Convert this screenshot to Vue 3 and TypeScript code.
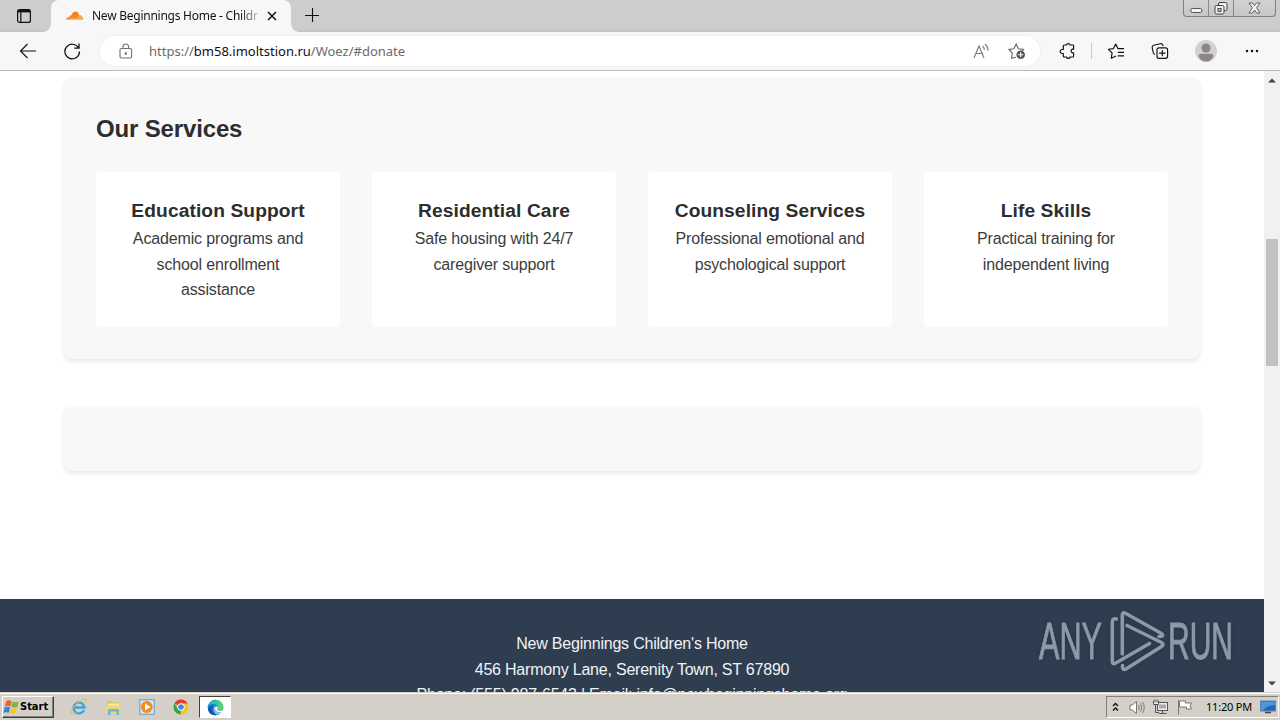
<script setup lang="ts">
interface Service {
  title: string
  lines: string[]
}

const services: Service[] = [
  { title: 'Education Support', lines: ['Academic programs and', 'school enrollment', 'assistance'] },
  { title: 'Residential Care', lines: ['Safe housing with 24/7', 'caregiver support'] },
  { title: 'Counseling Services', lines: ['Professional emotional and', 'psychological support'] },
  { title: 'Life Skills', lines: ['Practical training for', 'independent living'] },
]
</script>

<template>
  <div class="screen">
    <header class="tabstrip">
      <div class="tab-actions">
        <svg width="16" height="16" viewBox="0 0 16 16" fill="none" stroke="#111" stroke-width="1.2">
          <rect x="1.6" y="1.6" width="12.8" height="12.8" rx="2" />
          <path d="M2 3.200h12" stroke-width="2.4" />
          <path d="M4.800 4v10" />
        </svg>
      </div>
      <div class="tab">
        <svg class="cloud" width="17" height="10" viewBox="0 0 17 10">
          <path d="M0 8.6Q.4 6 3.2 6 3.4 3.9 5.4 4.4 6.6.7 9.6.6q2.800 0 3.300 3.100Q16.400 4 17 8.600z" fill="#f58220" />
          <path d="M11.500 8.600l1.300-4.500Q16.500 4 17 8.600z" fill="#fbad41" />
          <path d="M3.500 7.200h8.500" stroke="#f9c08d" stroke-width=".6" />
        </svg>
        <span class="tab-title">New Beginnings Home - Childr</span>
        <svg class="tab-close" width="10" height="10" viewBox="0 0 10 10"><path d="M1 1l8 8M9 1L1 9" stroke="#111" stroke-width="1.5" /></svg>
      </div>
      <svg class="newtab" width="14" height="14" viewBox="0 0 14 14"><path d="M7.500 0v14M0 7.500h14" stroke="#111" stroke-width="1.100" /></svg>
      <div class="window-controls">
        <span class="wc"><svg width="13" height="16" viewBox="0 0 13 16"><rect x=".8" y="8.500" width="11" height="4" rx="1.500" fill="#f4f4f4" stroke="#555" /></svg></span>
        <span class="wc"><svg width="14" height="16" viewBox="0 0 14 16" fill="#eee" stroke="#444"><rect x="4.500" y="2.500" width="8.500" height="8" rx="1.500" /><rect x="1" y="5.500" width="9" height="8.500" rx="1.500" /><rect x="4" y="8.500" width="3" height="2.800" fill="#ccc" /></svg></span>
        <span class="wc wide"><svg width="13" height="16" viewBox="0 0 13 16" fill="#f2f2f2" stroke="#555" stroke-width=".9"><path d="M1 3h3.500l2 2.700L8.500 3H12L8.600 7.800 12 13H8.500l-2-3-2 3H1l3.400-5.200z" /></svg></span>
      </div>
    </header>

    <div class="toolbar">
      <div class="tool back">
        <svg width="18" height="16" viewBox="0 0 18 16" fill="none" stroke="#111" stroke-width="1.150"><path d="M17 8H1.500M8.500 1L1.500 8l7 7" /></svg>
      </div>
      <div class="tool reload">
        <svg width="18" height="18" viewBox="0 0 18 18" fill="none" stroke="#111" stroke-width="1.250"><path d="M15.600 6A7.300 7.300 0 1 0 16.500 9.500M16 1.500V6h-4.800" /></svg>
      </div>
      <div class="address">
        <svg class="lock" width="14" height="16" viewBox="0 0 14 16" fill="none" stroke="#707070" stroke-width="1.100"><rect x="1" y="5.500" width="11.600" height="9.500" rx="1.500" /><path d="M4 5.500V4a2.800 3 0 0 1 5.600 0v1.500" /><circle cx="6.800" cy="10.500" r=".7" fill="#707070" /></svg>
        <span class="url">https://<b>bm58.imoltstion.ru</b>/Woez/#donate</span>
        <svg class="read" width="17" height="17" viewBox="0 0 17 17" fill="none" stroke="#777" stroke-width="1.100"><path d="M1 15L6 3l5 12M2.800 10.500h6.500M9.600 3q1.800 1.500 1.700 3.900M12 1.300q3.100 2.200 2.900 6.500" /></svg>
        <svg class="addfav" width="18" height="18" viewBox="0 0 18 18" fill="none" stroke="#666" stroke-width="1.100"><path d="M8 15.200L3.600 16.200 4.300 11 1 7.500l4.900-.8L8.200 2l2.200 4.700 5.100.8-1.300 1.500" /><circle cx="12.700" cy="12.800" r="4.300" fill="#555" stroke="none" /><path d="M12.700 10.300v5M10.200 12.800h5" stroke="#fff" /></svg>
      </div>
      <div class="tool puzzle">
        <svg width="18" height="18" viewBox="0 0 18 18" fill="none" stroke="#111" stroke-width="1.200"><path d="M5.500 3h2a1.900 1.900 0 0 1 3.700 0h2.600q.8 0 .8.800v3.400h-1a1.900 1.900 0 0 0 0 3.700h1v3.300q0 .8-.8.8h-2.600a1.900 1.900 0 0 1-3.700 0h-2q-1.200 0-1.200-1v-2.500H3.200a2 2 0 0 1 0-4h1.100V4q0-1 1.200-1z" stroke-linejoin="round" /></svg>
      </div>
      <i class="divider"></i>
      <div class="tool favs">
        <svg width="18" height="18" viewBox="0 0 18 18" fill="none" stroke="#111" stroke-width="1.150"><path d="M9 14l-4.700 2.200.8-5.200L1.500 7.300l5-.7L8.700 2l2.200 4.600H17M10.800 10.300H17M10.800 13.800H17" stroke-linejoin="round" /></svg>
      </div>
      <div class="tool collections">
        <svg width="18" height="18" viewBox="0 0 18 18" fill="none" stroke="#111" stroke-width="1.150"><path d="M4 12.500Q2.500 12 2.200 10.500L1.200 5.600Q.9 3.800 2.700 3.300l6.500-1.600q2-.4 2.600 1.500l.3 1" /><rect x="6" y="5.800" width="10.600" height="10.500" rx="2" /><path d="M11.300 8v6.200M8.200 11.100h6.200" /></svg>
      </div>
      <div class="tool profile">
        <svg width="22" height="22" viewBox="0 0 22 22"><circle cx="11" cy="11" r="11" fill="#d3d1d0" /><circle cx="11" cy="8" r="4.600" fill="#8b8786" /><path d="M3.500 16q0-2.200 2.500-2.200h10q2.500 0 2.500 2.200-2 5.500-7.500 5.500T3.500 16z" fill="#8b8786" /></svg>
      </div>
      <div class="tool more">
        <svg width="14" height="4" viewBox="0 0 14 4" fill="#111"><circle cx="2" cy="2" r="1.250" /><circle cx="7" cy="2" r="1.250" /><circle cx="12" cy="2" r="1.250" /></svg>
      </div>
    </div>

    <div class="viewport">
      <div class="page">
        <main>
          <section class="panel services">
            <h2>Our Services</h2>
            <div class="grid">
              <article v-for="s in services" :key="s.title" class="card">
                <h3>{{ s.title }}</h3>
                <p v-for="line in s.lines" :key="line">{{ line }}</p>
              </article>
            </div>
          </section>
          <section class="panel empty"></section>
        </main>
        <footer>
          <p>New Beginnings Children's Home</p>
          <p>456 Harmony Lane, Serenity Town, ST 67890</p>
          <p>Phone: (555) 987-6543 | Email: info@newbeginningshome.org</p>
        </footer>
        <svg class="watermark" width="220" height="76" viewBox="0 0 220 76">
          <g class="wm-text">
            <text x="3" y="53" textLength="63" lengthAdjust="spacingAndGlyphs">ANY</text>
            <text x="132" y="53" textLength="65" lengthAdjust="spacingAndGlyphs">RUN</text>
          </g>
          <g fill="none" stroke="#8d99a6" stroke-width="3.600" stroke-linecap="round" stroke-linejoin="round">
            <path d="M80.300 13q-4-1-4 3v39q0 4 3.500 2L113.500 37.500" />
            <path d="M86.300 48V9.500q0-4 3.200-2.200L125.500 27.500q3 3-2.500 3" />
            <path d="M91 19.500l34.500 17q3 2 0 4L90 63q-4 1.500-3.500-3.500" />
          </g>
        </svg>
      </div>
      <div class="scrollbar">
        <svg width="8" height="5" viewBox="0 0 8 5"><path d="M0 4.500L4 .5l4 4z" fill="#444" /></svg>
        <i class="thumb"></i>
        <svg width="8" height="5" viewBox="0 0 8 5"><path d="M0 .5l4 4 4-4z" fill="#444" /></svg>
      </div>
    </div>

    <div class="taskbar">
      <div class="start">
        <svg width="17" height="17" viewBox="0 0 16 16"><path d="M3 2q2.500-1.500 5 0L7 7Q4.500 5.800 1.800 7z" fill="#e8622a" /><path d="M8.800 2.400q2.700 1.200 6 0L13.500 7.500q-3 1.200-5.600 0z" fill="#79b648" /><path d="M1.500 8q2.700-1.300 5.200 0l-1.200 5Q3 11.800.3 13z" fill="#3e83ce" /><path d="M7.600 8.500q2.800 1.200 5.700 0l-1.400 5q-2.800 1.200-5.500 0z" fill="#f7c52d" /></svg>
        <span>Start</span>
      </div>
      <div class="launch ie">
        <svg width="18" height="18" viewBox="0 0 18 18" fill="none"><path d="M14 12.300A5.500 5.500 0 1 1 14.500 9.500H5" stroke="#3ba4e2" stroke-width="2.400" /><path d="M14.500 5Q18 1.300 15.500 1 12.500.9 6.500 6T1.500 15.500Q2.500 17.500 7 14.500" stroke="#e0bb50" stroke-width="1" /></svg>
      </div>
      <div class="launch folder">
        <svg width="17" height="17" viewBox="0 0 17 17"><path d="M2 2h5l1 1.500h6V12H2z" fill="#e6c05a" /><path d="M3 4.500h11v6H3z" fill="#fbe9a0" /><path d="M1 6.500h14.500V14H1z" fill="#f3d478" /><path d="M3 16v-4.500q0-1.500 1.500-1.500h8q1.500 0 1.500 1.500V16h-2.500v-3.500h-6V16z" fill="#67b5e1" /></svg>
      </div>
      <div class="launch wmp">
        <svg width="16" height="16" viewBox="0 0 16 16"><rect x=".8" y=".8" width="14.400" height="14.400" fill="#d6eafa" stroke="#5a9bcc" /><circle cx="7.800" cy="8" r="5.900" fill="#f58a1f" /><path d="M6 4.500v7L11.500 8z" fill="#fff" /></svg>
      </div>
      <div class="launch chrome">
        <svg width="16" height="16" viewBox="0 0 16 16"><circle cx="8" cy="8" r="7.500" fill="#f9c41b" /><path d="M8 8L1.400 4.400A7.500 7.500 0 0 1 14.600 4.500H8z" fill="#e13d31" /><path d="M1.400 4.400L5 10l3 1.500L7.500 15.500A7.500 7.500 0 0 1 1.400 4.400z" fill="#2fa452" /><circle cx="8" cy="8" r="3.700" fill="#fff" /><circle cx="8" cy="8" r="2.800" fill="#4285f4" /></svg>
      </div>
      <div class="launch edge">
        <svg width="17" height="17" viewBox="0 0 17 17"><circle cx="8.500" cy="8.500" r="7.800" fill="#1479cf" /><path d="M.8 8A7.800 7.800 0 0 1 16.300 8.500q-.3 3-4 3-2.500 0-2.300-1.500.8-1 .3-2.500Q9 5 6 5 2.500 5 .8 8z" fill="#2ebfb5" /><path d="M8 .7q7 0 8.300 7.800-.3 3-4 3-2.500 0-2.300-1.500.8-1 .3-2.500Q14 5 8 .7z" fill="#55d36d" /><path d="M7.500 7Q5 12.500 9.500 15.500q4 .5 5.800-2.600-4.500 1.800-6.700-.7-1.500-2 0-4.200z" fill="#fff" opacity=".55" /><path d="M8.500 7.500q2-.5 2 1.500 0 1-.7 1.600.5 1.400 3.500 1.200l3-.9-1 2q-4 1.700-6.400-.8-1.700-2-.4-4.600z" fill="#fff" /><path d="M5.500 7.500Q3 13 9 16.200 3 16.500 1.200 11.500q0-4 4.300-4z" fill="#1455a5" /></svg>
      </div>
      <div class="tray">
        <svg class="chev" width="7" height="10" viewBox="0 0 7 10" fill="none" stroke="#111" stroke-width="1.400"><path d="M1 4l2.500-2.500L6 4M1 8.500L3.500 6 6 8.500" /></svg>
        <svg class="spk" width="17" height="15" viewBox="0 0 17 15" fill="none" stroke="#777"><path d="M1 5h2.500L7.500 1.500v12L3.500 10H1z" fill="#fff" /><path d="M9.500 5q1.500 2.500 0 5M11.500 3.500q2.500 4 0 8M13.500 2q3.500 5.500 0 11" /></svg>
        <svg class="net" width="17" height="16" viewBox="0 0 17 16" fill="#eee" stroke="#555"><rect x="5.500" y="3.500" width="10" height="8" /><path d="M7 5.500h7v4H7z" fill="#aaa" stroke="none" /><path d="M7 14.500h7.500M10.500 12v2.500M3.500 6v7.500H7" fill="none" /><path d="M1.500 1.500v4h5v-4M3 .5v3M5 .5v3" /></svg>
        <svg class="flag" width="16" height="16" viewBox="0 0 16 16" fill="#fff" stroke="#777"><path d="M1.500 1v14.500" /><path d="M2.500 2h6v2h6l-1.500 3 1.500 3h-5V8h-7z" /></svg>
        <span class="clock">11:20 PM</span>
        <svg class="desk" width="16" height="14" viewBox="0 0 16 14"><rect x=".5" y="1" width="15" height="10" fill="#2466b8" stroke="#6286af" /><path d="M1 2h14v3Q7 5 3 10.500H1z" fill="#4c98de" /><path d="M5 12.500h6" stroke="#444" stroke-width="1.500" /></svg>
      </div>
    </div>
  </div>
</template>

<style>
body { margin: 0; overflow: hidden; }
</style>

<style scoped>
.screen { width: 1280px; height: 720px; display: flex; flex-direction: column; overflow: hidden; background: #fff; font-family: "Liberation Sans", Arial, sans-serif; }
svg { display: block; flex: none; }
.tabstrip { flex: none; height: 32px; display: flex; background: linear-gradient(#cdcdcd 28px, #c4c4c4); }
.tab-actions { width: 51px; padding: 8px 0 0 16px; box-sizing: border-box; }
.tab { width: 240px; height: 32px; box-sizing: border-box; display: flex; align-items: center; background: #f7f7f7; border-radius: 8px 8px 0 0; padding-left: 15px; position: relative; }
.tab::before, .tab::after { content: ""; position: absolute; bottom: 0; width: 8px; height: 8px; }
.tab::before { left: -8px; background: radial-gradient(circle at 0 0, transparent 7.500px, #f7f7f7 8px); }
.tab::after { right: -8px; background: radial-gradient(circle at 100% 0, transparent 7.500px, #f7f7f7 8px); }
.tab-title { width: 167px; margin-left: 9px; overflow: hidden; white-space: nowrap; font: 12px/18px "Noto Sans", sans-serif; letter-spacing: -0.250px; color: #111; background: linear-gradient(90deg, #111 148px, #ccc 167px); -webkit-background-clip: text; background-clip: text; -webkit-text-fill-color: transparent; }
.tab-close { margin-left: 8px; }
.newtab { margin: 8px 0 0 14px; }
.window-controls { margin-left: auto; margin-right: 4px; height: 17px; box-sizing: border-box; border: 1px solid #808080; border-top: 0; border-radius: 0 0 4px 4px; display: flex; background: linear-gradient(#d2d2d2, #c6c6c6); }
.wc { width: 24px; display: flex; justify-content: center; border-right: 1px solid #888; }
.wc.wide { width: 41px; border-right: 0; }
.toolbar { flex: none; height: 39px; box-sizing: border-box; display: flex; align-items: center; background: #f7f7f7; border-bottom: 1px solid #b9b9b9; padding-left: 3px; }
.tool { display: flex; justify-content: center; flex: none; }
.back { width: 50px; }
.reload { width: 38px; margin-right: 9px; }
.address { width: 940px; height: 30px; flex: none; background: #fff; border-radius: 15px; display: flex; align-items: center; box-shadow: 0 0 0 1px #f1f1f1; }
.lock { margin-left: 19px; }
.url { margin-left: 16px; font: 13px/20px "Noto Sans", sans-serif; color: #6b6b6b; white-space: nowrap; }
.url b { font-weight: 400; color: #111; }
.read { margin-left: auto; }
.addfav { margin: 0 14px 0 18px; }
.puzzle { width: 36px; margin-left: 10px; }
.divider { width: 1px; height: 16px; background: #c8c8c8; margin: 0 4px 0 5px; }
.favs { width: 40px; }
.collections { width: 48px; }
.profile { width: 44px; }
.more { width: 48px; }
.viewport { height: 621px; flex: none; display: flex; overflow: hidden; }
.page { width: 1264px; position: relative; display: flex; flex-direction: column; background: #fff; overflow: hidden; }
main { height: 528px; flex: none; box-sizing: border-box; padding: 7px 64px 0; }
.panel { box-sizing: border-box; background: #f8f8f8; border-radius: 8px; box-shadow: 0 2px 4px rgba(0, 0, 0, .1); padding: 32px; }
.services { height: 281px; }
.empty { height: 64px; margin-top: 48px; }
h2, h3, p { margin: 0; color: #2d2d2d; }
h2 { font-size: 24px; line-height: 38.400px; margin-bottom: 23.600px; letter-spacing: -.15px; white-space: nowrap; }
.grid { display: grid; grid-template-columns: repeat(4, 1fr); gap: 32px; }
.card { height: 155px; box-sizing: border-box; padding: 24px 0; text-align: center; background: #fff; border-radius: 4px; }
h3 { font-size: 19.200px; line-height: 30px; letter-spacing: .1px; white-space: nowrap; }
p { font-size: 16px; line-height: 25.600px; white-space: nowrap; letter-spacing: -.15px; color: #3c3c3c; }
footer { flex: 1; background: #2e3e50; padding-top: 32px; text-align: center; }
footer p { color: #f0f3f5; letter-spacing: -.21px; }
.watermark { position: absolute; left: 1036px; top: 535px; filter: drop-shadow(0 0 2px rgba(20, 30, 40, .3)); }
.wm-text { font: 51px "Liberation Sans", Arial, sans-serif; fill: #8d99a6; stroke: #8d99a6; stroke-width: 1px; }
.scrollbar { width: 16px; background: #f1f1f1; display: flex; flex-direction: column; align-items: center; box-sizing: border-box; padding: 7px 0 6px; }
.thumb { width: 12px; height: 127px; background: #c1c1c1; margin: 156px 0 auto; }
.taskbar { flex: none; height: 28px; box-sizing: border-box; border-top: 1px solid #d4d0c8; box-shadow: inset 0 1px #fff; background: #d4d0c8; display: flex; padding: 3px 1px 2px 2px; position: relative; }
.start { width: 52px; height: 22px; box-sizing: border-box; border: 1px solid; border-color: #fff #404040 #404040 #fff; box-shadow: inset -1px -1px #808080; display: flex; align-items: center; padding-left: 0; }
.start span { font: bold 11px/16px "DejaVu Sans Condensed", "DejaVu Sans", sans-serif; letter-spacing: 0; color: #000; }
.launch { display: flex; align-items: center; justify-content: center; width: 34px; height: 22px; box-sizing: border-box; }
.ie { margin-left: 8px; }
.edge { width: 32px; margin-left: 1px; background: #fff; border: 1px solid; border-color: #404040 #fff #fff #404040; }
.tray { margin-left: auto; width: 173px; height: 22px; box-sizing: border-box; border: 1px solid; border-color: #808080 #fff #fff #808080; display: flex; align-items: center; padding-left: 5px; }
.spk { margin-left: 10px; }
.net { margin-left: 6px; }
.flag { margin-left: 8px; }
.clock { margin-left: 13px; width: 48px; font: 11px/16px "Noto Sans", sans-serif; letter-spacing: -.2px; white-space: nowrap; color: #000; }
.desk { margin-left: 6px; }
</style>
